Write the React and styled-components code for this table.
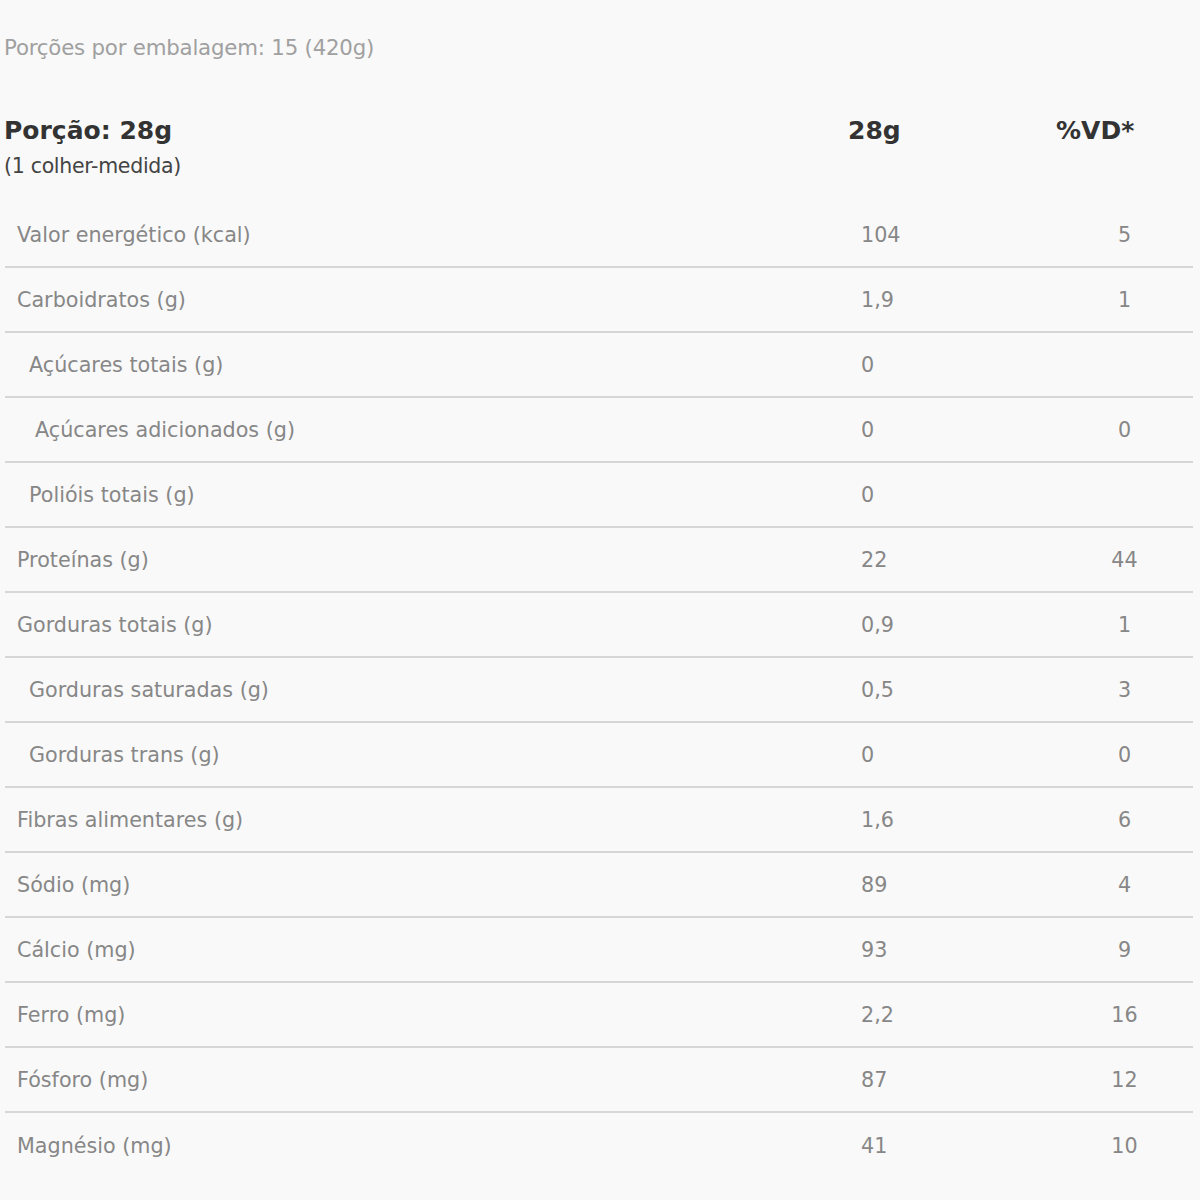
import React from "react";
import styled, { createGlobalStyle } from "styled-components";

const Global = createGlobalStyle`
  html, body { margin: 0; padding: 0; background: #f9f9f9; }
  body { font-family: "DejaVu Sans", "Open Sans", sans-serif; }
`;

const Page = styled.div`
  width: 1200px;
  min-height: 1200px;
  background: #f9f9f9;
  padding: 33px 7px 0 4px;
  box-sizing: border-box;
`;

const Servings = styled.div`
  font-size: 21.3px;
  line-height: 30px;
  color: #a0a0a0;
  letter-spacing: -0.2px;
`;

const Head = styled.div`
  display: grid;
  grid-template-columns: 844px 208px 1fr;
  margin-top: 53px;
  height: 87px;
  align-items: start;
`;

const HeadTitle = styled.div`
  font-size: 25px;
  line-height: 30px;
  font-weight: 700;
  color: #333;
`;

const HeadSub = styled.div`
  font-size: 20.5px;
  line-height: 28px;
  color: #444;
  letter-spacing: -0.3px;
  margin-top: 6px;
`;

const HeadCol = styled.div`
  font-size: 25px;
  line-height: 30px;
  font-weight: 700;
  color: #333;
`;

const Table = styled.div`
  margin-left: 1px;
  display: flex;
  flex-direction: column;
`;

const Row = styled.div`
  display: grid;
  grid-template-columns: 856px 195px 1fr;
  align-items: center;
  height: 65px;
  box-sizing: border-box;
  border-bottom: ${(p) => (p.$last ? "none" : "2px solid #d6d6d6")};
  padding-top: 1px;
  font-size: 20.7px;
  color: #878787;
`;

const Label = styled.div`
  padding-left: ${(p) => 12 + p.$indent}px;
`;

const Value = styled.div``;

const Vd = styled.div`
  text-align: center;
`;

const rows = [
  ["Valor energético (kcal)", "104", "5", 0],
  ["Carboidratos (g)", "1,9", "1", 0],
  ["Açúcares totais (g)", "0", "", 12],
  ["Açúcares adicionados (g)", "0", "0", 18],
  ["Polióis totais (g)", "0", "", 12],
  ["Proteínas (g)", "22", "44", 0],
  ["Gorduras totais (g)", "0,9", "1", 0],
  ["Gorduras saturadas (g)", "0,5", "3", 12],
  ["Gorduras trans (g)", "0", "0", 12],
  ["Fibras alimentares (g)", "1,6", "6", 0],
  ["Sódio (mg)", "89", "4", 0],
  ["Cálcio (mg)", "93", "9", 0],
  ["Ferro (mg)", "2,2", "16", 0],
  ["Fósforo (mg)", "87", "12", 0],
  ["Magnésio (mg)", "41", "10", 0],
];

export default function App() {
  return (
    <Page>
      <Global />
      <Servings>Porções por embalagem: 15 (420g)</Servings>
      <Head>
        <div>
          <HeadTitle>Porção: 28g</HeadTitle>
          <HeadSub>(1 colher-medida)</HeadSub>
        </div>
        <HeadCol>28g</HeadCol>
        <HeadCol>%VD*</HeadCol>
      </Head>
      <Table>
        {rows.map(([label, value, vd, indent], i) => (
          <Row key={label} $last={i === rows.length - 1}>
            <Label $indent={indent}>{label}</Label>
            <Value>{value}</Value>
            <Vd>{vd}</Vd>
          </Row>
        ))}
      </Table>
    </Page>
  );
}
